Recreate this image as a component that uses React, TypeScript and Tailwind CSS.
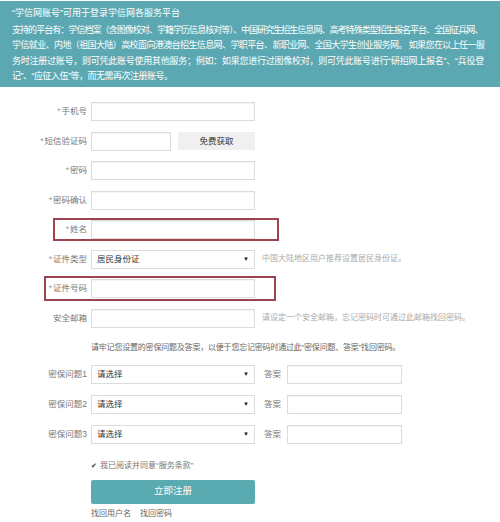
import React from "react";

// Latin quotes from Liberation Sans (narrow, like the original), CJK from Noto
const font = { fontFamily: '"Liberation Sans", "Noto Sans CJK SC", sans-serif' };

const introLines: { text: string; cls: string }[] = [
  {
    text: "支持的平台有：学信档案（含图像校对、学籍学历信息核对等）、中国研究生招生信息网、高考特殊类型招生报名平台、全国征兵网、",
    cls: "tracking-[-0.95px]",
  },
  {
    text: "学信就业、内地（祖国大陆）高校面向港澳台招生信息网、学职平台、新职业网、全国大学生创业服务网。 如果您在以上任一服",
    cls: "tracking-[-0.6px]",
  },
  {
    text: "务时注册过账号，则可凭此账号使用其他服务；例如：如果您进行过图像校对，则可凭此账号进行“研招网上报名”、“兵役登",
    cls: "tracking-[-0.25px]",
  },
  { text: "记”、“应征入伍”等，而无需再次注册账号。", cls: "tracking-[-0.5px]" },
];

function Label({ text, required = true }: { text: string; required?: boolean }) {
  return (
    <div className="w-[91px] shrink-0 pr-[4px] text-right text-[8.5px] text-[#777]">
      {required && <span className="mr-[1px] text-[#999]">*</span>}
      {text}
    </div>
  );
}

function TextInput({ width = "w-[164px]" }: { width?: string }) {
  return (
    <div
      className={`${width} h-[19px] shrink-0 border border-[#dcdcdc] bg-white shadow-[inset_0_1px_1px_rgba(0,0,0,0.05)]`}
    />
  );
}

function SelectBox({ value }: { value: string }) {
  return (
    <div className="flex h-[19px] w-[164px] shrink-0 items-center justify-between border border-[#dcdcdc] bg-white pl-[5px] pr-[5px]">
      <span className="text-[8.5px] text-[#333]">{value}</span>
      <span className="text-[6px] text-[#222]">▼</span>
    </div>
  );
}

function Row({ children }: { children: React.ReactNode }) {
  return <div className="relative flex h-[19px] items-center">{children}</div>;
}

function Hint({ text }: { text: string }) {
  return <span className="ml-[7px] text-[8px] text-[#aaa]">{text}</span>;
}

function QuestionRow({ n }: { n: number }) {
  return (
    <Row>
      <Label text={`密保问题${n}`} required={false} />
      <SelectBox value="请选择" />
      <span className="ml-[9px] w-[23px] text-[8.5px] text-[#777]">答案</span>
      <TextInput width="w-[115px]" />
    </Row>
  );
}

export default function App() {
  return (
    <div className="h-[522px] w-[500px] overflow-hidden bg-white" style={font}>
      {/* header notice */}
      <div className="mt-[1px] h-[86px] bg-[#5ba8b2] px-[12px] pt-[5px] text-[9px] leading-[15.5px] text-white">
        <div className="mb-[1px]">“学信网账号”可用于登录学信网各服务平台</div>
        {introLines.map((l, i) => (
          <div key={i} className={`whitespace-nowrap ${l.cls}`}>
            {l.text}
          </div>
        ))}
      </div>

      {/* form */}
      <div className="mt-[15px] flex flex-col gap-[10.5px]">
        <Row>
          <Label text="手机号" />
          <TextInput />
        </Row>
        <Row>
          <Label text="短信验证码" />
          <TextInput width="w-[80px]" />
          <div className="ml-[7px] flex h-[18px] w-[77px] items-center justify-center bg-[#f0f0f0] text-[8.5px] text-[#333]">
            免费获取
          </div>
        </Row>
        <Row>
          <Label text="密码" />
          <TextInput />
        </Row>
        <Row>
          <Label text="密码确认" />
          <TextInput />
        </Row>
        <Row>
          <Label text="姓名" />
          <TextInput />
          <div className="absolute left-[53px] top-[-2px] h-[23px] w-[226px] border-2 border-[#9c4550]" />
        </Row>
        <Row>
          <Label text="证件类型" />
          <SelectBox value="居民身份证" />
          <Hint text="中国大陆地区用户推荐设置居民身份证。" />
        </Row>
        <Row>
          <Label text="证件号码" />
          <TextInput />
          <div className="absolute left-[44px] top-[-3px] h-[25px] w-[232px] border-2 border-[#9c4550]" />
        </Row>
        <Row>
          <Label text="安全邮箱" required={false} />
          <TextInput />
          <Hint text="请设定一个安全邮箱，忘记密码时可通过此邮箱找回密码。" />
        </Row>
      </div>

      <div className="mt-[14px] pl-[91px] text-[8px] tracking-[-0.2px] text-[#666]">
        请牢记您设置的密保问题及答案，以便于您忘记密码时通过此“密保问题、答案”找回密码。
      </div>

      <div className="mt-[11px] flex flex-col gap-[11px]">
        <QuestionRow n={1} />
        <QuestionRow n={2} />
        <QuestionRow n={3} />
      </div>

      <div className="mt-[16px] pl-[91px] text-[8px] text-[#777]">
        <span className="mr-[3px] text-[7px] text-[#333]">✔</span>我已阅读并同意“服务条款”
      </div>

      <div className="ml-[91px] mt-[8px] flex h-[24px] w-[164px] items-center justify-center rounded-[2px] bg-[#5aaab2] text-[9.5px] text-white">
        立即注册
      </div>

      <div className="mt-[4px] flex gap-[9px] pl-[91px] text-[8px] text-[#666]">
        <span>找回用户名</span>
        <span>找回密码</span>
      </div>
    </div>
  );
}
